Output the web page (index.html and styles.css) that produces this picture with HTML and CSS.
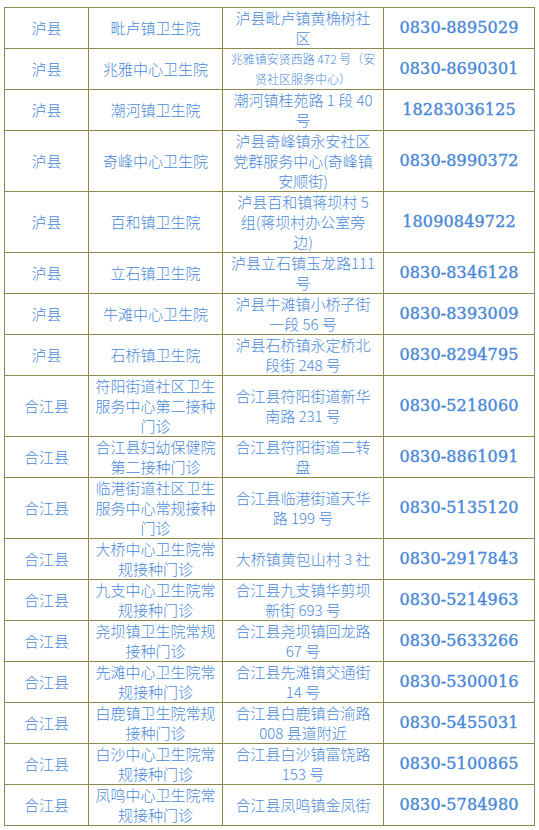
FILE: index.html
```html
<!DOCTYPE html>
<html lang="zh-CN">
<head>
<meta charset="utf-8">
<title>接种门诊</title>
<link rel="stylesheet" href="styles.css">
</head>
<body>
<table class="sites">
  <colgroup>
    <col class="c-county">
    <col class="c-name">
    <col class="c-addr">
    <col class="c-phone">
  </colgroup>
  <tbody>
    <tr><td>泸县</td><td>毗卢镇卫生院</td><td>泸县毗卢镇黄桷树社区</td><td class="phone">0830-8895029</td></tr>
    <tr><td>泸县</td><td>兆雅中心卫生院</td><td class="small">兆雅镇安贤西路 472 号（安贤社区服务中心）</td><td class="phone">0830-8690301</td></tr>
    <tr><td>泸县</td><td>潮河镇卫生院</td><td>潮河镇桂苑路 1 段 40 号</td><td class="phone">18283036125</td></tr>
    <tr><td>泸县</td><td>奇峰中心卫生院</td><td>泸县奇峰镇永安社区党群服务中心(奇峰镇安顺街)</td><td class="phone">0830-8990372</td></tr>
    <tr><td>泸县</td><td>百和镇卫生院</td><td>泸县百和镇蒋坝村 5 组(蒋坝村办公室旁<br>边)</td><td class="phone">18090849722</td></tr>
    <tr><td>泸县</td><td>立石镇卫生院</td><td>泸县立石镇玉龙路111号</td><td class="phone">0830-8346128</td></tr>
    <tr><td>泸县</td><td>牛滩中心卫生院</td><td>泸县牛滩镇小桥子街一段 56 号</td><td class="phone">0830-8393009</td></tr>
    <tr><td>泸县</td><td>石桥镇卫生院</td><td>泸县石桥镇永定桥北段街 248 号</td><td class="phone">0830-8294795</td></tr>
    <tr><td>合江县</td><td>符阳街道社区卫生服务中心第二接种门诊</td><td>合江县符阳街道新华南路 231 号</td><td class="phone">0830-5218060</td></tr>
    <tr><td>合江县</td><td>合江县妇幼保健院第二接种门诊</td><td>合江县符阳街道二转盘</td><td class="phone">0830-8861091</td></tr>
    <tr><td>合江县</td><td>临港街道社区卫生服务中心常规接种门诊</td><td>合江县临港街道天华路 199 号</td><td class="phone">0830-5135120</td></tr>
    <tr><td>合江县</td><td>大桥中心卫生院常规接种门诊</td><td>大桥镇黄包山村 3 社</td><td class="phone">0830-2917843</td></tr>
    <tr><td>合江县</td><td>九支中心卫生院常规接种门诊</td><td>合江县九支镇华剪坝新街 693 号</td><td class="phone">0830-5214963</td></tr>
    <tr><td>合江县</td><td>尧坝镇卫生院常规接种门诊</td><td>合江县尧坝镇回龙路 67 号</td><td class="phone">0830-5633266</td></tr>
    <tr><td>合江县</td><td>先滩中心卫生院常规接种门诊</td><td>合江县先滩镇交通街 14 号</td><td class="phone">0830-5300016</td></tr>
    <tr><td>合江县</td><td>白鹿镇卫生院常规接种门诊</td><td>合江县白鹿镇合渝路 008 县道附近</td><td class="phone">0830-5455031</td></tr>
    <tr><td>合江县</td><td>白沙中心卫生院常规接种门诊</td><td>合江县白沙镇富饶路 153 号</td><td class="phone">0830-5100865</td></tr>
    <tr><td>合江县</td><td>凤鸣中心卫生院常规接种门诊</td><td>合江县凤鸣镇金凤街</td><td class="phone">0830-5784980</td></tr>
  </tbody>
</table>
</body>
</html>
```

FILE: styles.css
```css
html, body {
  margin: 0;
  background: #ffffff;
}

body {
  padding: 7px 0 0 4px;
  font-family: "Noto Sans CJK SC", sans-serif;
  color: #4b89d8;
}

.sites {
  border-collapse: separate;
  border-spacing: 0;
  table-layout: fixed;
  width: 531px;
  border-left: 1px solid #8f8750;
  border-top: 1px solid #8f8750;
}

.c-county { width: 84px; }
.c-name { width: 134px; }
.c-addr { width: 161px; }
.c-phone { width: 151px; }

.sites td {
  border-right: 1px solid #8f8750;
  border-bottom: 1px solid #8f8750;
  padding: 0 6px;
  height: 40px;
  text-align: center;
  vertical-align: middle;
  font-size: 15px;
  line-height: 20px;
  font-weight: 300;
}

.sites td.small {
  font-size: 12px;
  padding: 0 4px;
}

.sites td.phone {
  font-family: "DejaVu Serif", "Liberation Serif", serif;
  font-weight: normal;
  font-size: 16px;
  letter-spacing: 0.15px;
  -webkit-text-stroke: 0.4px currentColor;
  padding: 0 4px;
}
```
